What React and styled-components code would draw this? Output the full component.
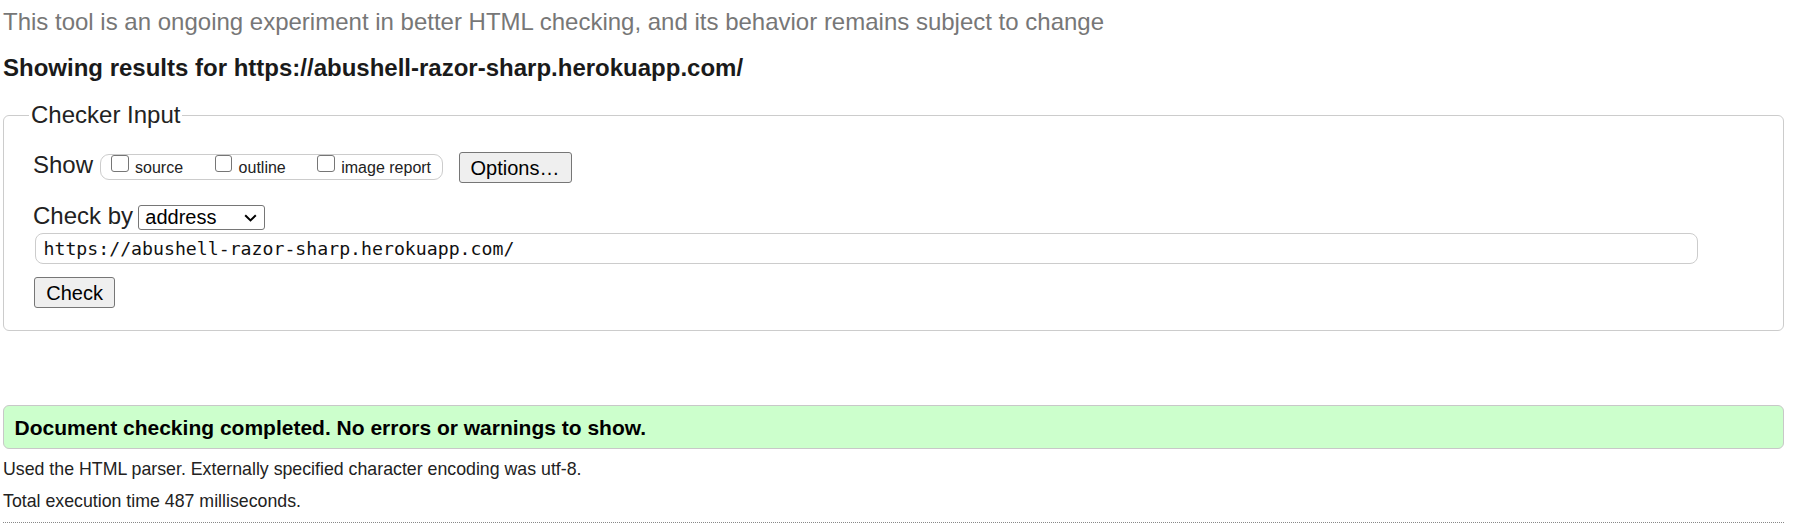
import React from 'react';
import styled, { createGlobalStyle } from 'styled-components';

const GlobalStyle = createGlobalStyle`
	html,
	body {
		margin: 0;
		padding: 0;
		background: #fff;
	}

	body {
		font-family: 'Liberation Sans', Arial, Helvetica, sans-serif;
		color: #222;
	}
`;

const Page = styled.div`
	padding: 8px 11px 0 3px;
`;

const Intro = styled.p`
	margin: 0;
	font-size: 24px;
	line-height: 28px;
	color: #777;
`;

const ResultsTitle = styled.h2`
	margin: 18px 0 0;
	font-size: 24px;
	line-height: 28px;
	font-weight: bold;
	color: #1a1a1a;
`;

const Fieldset = styled.fieldset`
	margin: 19px 0 0;
	padding: 23px 85px 21.5px 29px;
	border: 1px solid #ccc;
	border-radius: 6px;
	min-width: 0;
`;

const Legend = styled.legend`
	margin-left: -4px;
	padding: 0 2px;
	font-size: 24px;
	line-height: 28px;
	color: #222;
`;

const ControlRow = styled.div`
	display: flex;
	align-items: flex-start;
	height: ${(p) => p.$height}px;
	margin-top: ${(p) => p.$top || 0}px;
`;

const RowLabel = styled.span`
	font-size: 24px;
	line-height: 28px;
	margin-top: ${(p) => p.$nudge || 0}px;
	color: #222;
`;

const CheckGroup = styled.div`
	display: flex;
	align-items: flex-start;
	gap: 31.5px;
	box-sizing: border-box;
	height: 26px;
	margin: 1.5px 0 0 7px;
	padding: 0 10.5px 0 10px;
	border: 1px solid #ccc;
	border-radius: 9px;
`;

const Option = styled.label`
	display: flex;
	align-items: flex-start;
`;

const Box = styled.input`
	appearance: none;
	box-sizing: border-box;
	width: 17.5px;
	height: 17.5px;
	margin: 0;
	border: 1.5px solid #767676;
	border-radius: 3px;
	background: #fff;
`;

const OptionText = styled.span`
	margin: 4px 0 0 6.5px;
	font-size: 16px;
	line-height: 18px;
	color: #222;
`;

const Button = styled.button`
	box-sizing: border-box;
	height: 31px;
	margin: ${(p) => p.$margin || 0};
	padding: 0 ${(p) => p.$pad}px;
	border: 1px solid #767676;
	border-radius: 3px;
	background: #efefef;
	font-family: 'Liberation Sans', Arial, sans-serif;
	font-size: 20px;
	line-height: 20px;
	color: #000;
`;

const SelectWrap = styled.div`
	position: relative;
	margin: 2.6px 0 0 5.3px;
`;

const Select = styled.select`
	appearance: none;
	box-sizing: border-box;
	width: 127px;
	height: 25px;
	padding: 0 0 0 6px;
	border: 1px solid #767676;
	border-radius: 3px;
	background: #fff;
	font-family: 'Liberation Sans', Arial, sans-serif;
	font-size: 20px;
	color: #000;
`;

const Chevron = styled.svg`
	position: absolute;
	right: 8px;
	top: 9.5px;
	pointer-events: none;
`;

const UrlInput = styled.input`
	display: block;
	box-sizing: border-box;
	width: calc(100% - 1.5px);
	height: 31px;
	margin: 3.2px 0 0 1.5px;
	padding: 0 8px;
	border: 1px solid #ccc;
	border-radius: 8px;
	font-family: 'DejaVu Sans Mono', 'Liberation Mono', monospace;
	font-size: 18.2px;
	color: #111;
	background: #fff;
`;

const StatusBox = styled.div`
	margin-top: 74.5px;
	padding: 9.5px 10px 8.5px 10.5px;
	border: 1px solid #c8c8c8;
	border-radius: 6px;
	background: #ccffcc;
	font-size: 21px;
	line-height: 24px;
	font-weight: bold;
	color: #000;
`;

const Meta = styled.p`
	margin: ${(p) => p.$top}px 0 0;
	font-size: 17.75px;
	line-height: 21px;
	color: #222;
`;

const Rule = styled.hr`
	margin: 10.5px 0 0;
	border: 0;
	border-top: 1px dotted #888;
`;

const options = ['source', 'outline', 'image report'];
const url = 'https://abushell-razor-sharp.herokuapp.com/';

const App = () => (
	<Page>
		<GlobalStyle />
		<Intro>
			This tool is an ongoing experiment in better HTML checking, and its behavior remains subject to change
		</Intro>
		<ResultsTitle>Showing results for {url}</ResultsTitle>

		<Fieldset>
			<Legend>Checker Input</Legend>
			<ControlRow $height={31}>
				<RowLabel $nudge={-1}>Show</RowLabel>
				<CheckGroup>
					{options.map((name) => (
						<Option key={name}>
							<Box type="checkbox" />
							<OptionText>{name}</OptionText>
						</Option>
					))}
				</CheckGroup>
				<Button $pad={11} $margin="0 0 0 16px">
					Options…
				</Button>
			</ControlRow>

			<ControlRow $top={19}>
				<RowLabel>Check by</RowLabel>
				<SelectWrap>
					<Select defaultValue="address">
						<option value="address">address</option>
						<option value="file">file upload</option>
						<option value="text">text input</option>
					</Select>
					<Chevron width="13" height="8" viewBox="0 0 13 8">
						<path d="M1.2 1.2 L6.5 6.4 L11.8 1.2" fill="none" stroke="#000" strokeWidth="2" />
					</Chevron>
				</SelectWrap>
			</ControlRow>

			<UrlInput type="url" defaultValue={url} />

			<Button $pad={11} $margin="13px 0 0 1.3px">
				Check
			</Button>
		</Fieldset>

		<StatusBox>Document checking completed. No errors or warnings to show.</StatusBox>
		<Meta $top={10}>Used the HTML parser. Externally specified character encoding was utf-8.</Meta>
		<Meta $top={10.5}>Total execution time 487 milliseconds.</Meta>
		<Rule />
	</Page>
);

export default App;
